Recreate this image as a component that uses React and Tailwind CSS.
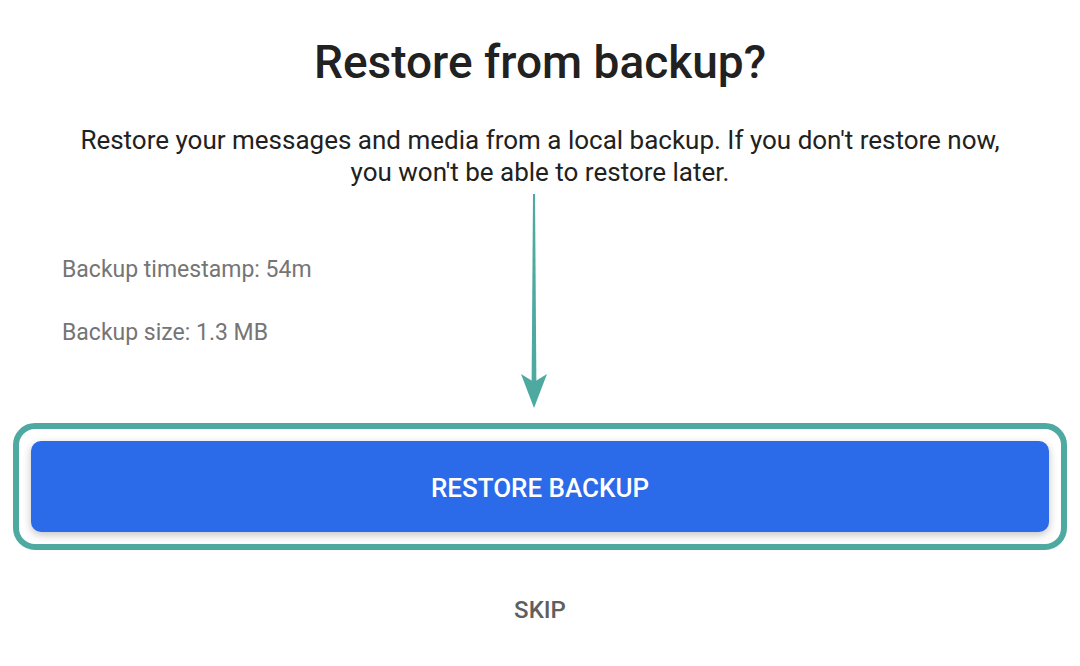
import React from 'react';

const Arrow = () => (
  <svg
    className="absolute left-[520px] top-[194px]"
    width="28"
    height="216"
    viewBox="0 0 28 216"
  >
    {/* tapered shaft */}
    <polygon points="13,0 15,0 16.4,190 11.6,190" fill="#4eaaa0" />
    {/* head */}
    <polygon points="1,180 14,188 27,180 14,214" fill="#4eaaa0" />
  </svg>
);

const App = () => {
  return (
    <div
      className="relative w-[1080px] h-[666px] bg-white overflow-hidden"
      style={{ fontFamily: 'Roboto, "Noto Sans", sans-serif' }}
    >
      <div className="flex flex-col">
        <h1 className="mt-[34px] text-center text-[46px] leading-[56px] font-medium text-[#212121]">
          Restore from backup?
        </h1>

        <p className="mt-[34px] px-[20px] text-center text-[26px] leading-[32px] text-[#212121]">
          Restore your messages and media from a local backup. If you don't restore now,
          <br />
          you won't be able to restore later.
        </p>

        <div className="mt-[68px] pl-[62px] flex flex-col gap-[35px] text-[23px] leading-[28px] text-[#757575]">
          <span>Backup timestamp: 54m</span>
          <span>Backup size: 1.3 MB</span>
        </div>

        <div className="mt-[76px] mx-[13px] p-[12px] border-[6px] border-[#4eaaa0] rounded-[22px]">
          <button className="w-full h-[91px] pt-[4px] rounded-[10px] bg-[#2b6ae9] text-white text-[26px] font-medium shadow-[0_3px_8px_rgba(0,0,0,0.24)]">
            RESTORE BACKUP
          </button>
        </div>

        <div className="mt-[46px] text-center text-[24px] leading-[28px] font-medium text-[#5f5f5f]">
          SKIP
        </div>
      </div>

      <Arrow />
    </div>
  );
};

export default App;
